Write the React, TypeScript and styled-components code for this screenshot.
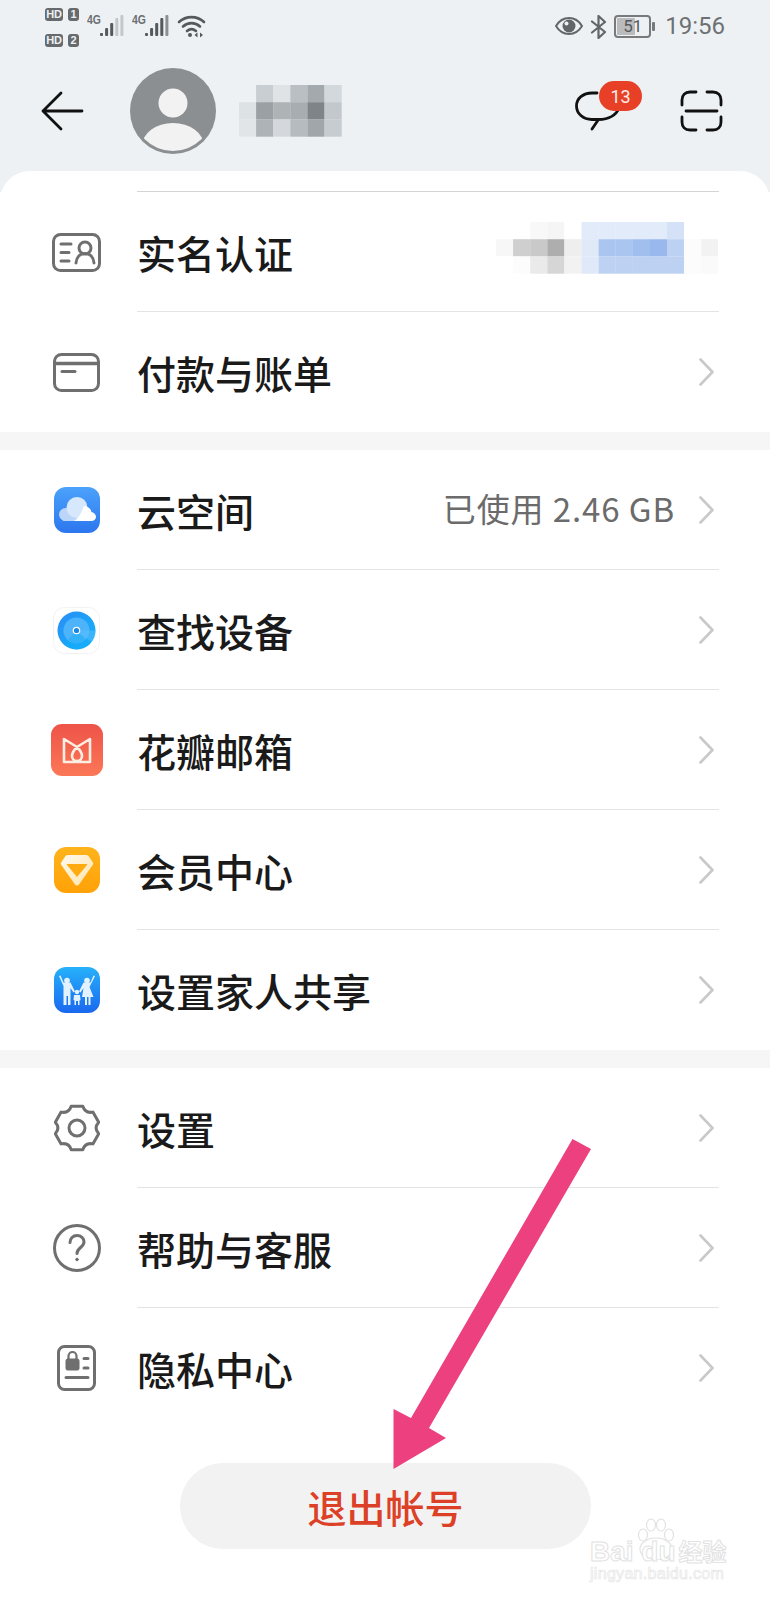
import React from "react";
import styled, { createGlobalStyle } from "styled-components";

const GlobalStyle = createGlobalStyle`
  html, body {
    margin: 0;
    padding: 0;
    background: #fff;
  }
  * {
    box-sizing: border-box;
  }
`;

const Page = styled.div`
  position: relative;
  width: 770px;
  height: 1600px;
  overflow: hidden;
  background: #edf1f4;
  font-family: "Noto Sans CJK SC", "Noto Sans", sans-serif;
`;

/* status bar */
const StatusBar = styled.div`
  display: flex;
  align-items: flex-start;
  justify-content: space-between;
  height: 68px;
  padding: 8px 45px 0;
`;

const StatusGroup = styled.div`
  display: flex;
  align-items: flex-start;
`;

const SimStack = styled.div`
  display: flex;
  flex-direction: column;
  gap: 13px;
  margin-right: 8px;
`;

const SimRow = styled.div`
  display: flex;
  gap: 5px;
`;

const SimBadge = styled.span<{ $wide?: boolean }>`
  display: block;
  width: ${(p) => (p.$wide ? "18px" : "11px")};
  height: 13px;
  border-radius: 3px;
  background: #666a6d;
  color: #edf1f4;
  font: 700 11px/13px "Liberation Sans", sans-serif;
  text-align: center;
  letter-spacing: -0.3px;
`;

const Network = styled.span`
  width: 13px;
  margin-top: 5px;
  color: #6a6e71;
  font: 700 13px/13px "Liberation Sans", sans-serif;
  transform: scaleX(0.8);
  transform-origin: left;
`;

const SignalIcon = styled.svg`
  display: block;
  width: 24px;
  height: 22px;
  margin: 7px 8px 0 0;
`;

const WifiIcon = styled.svg`
  display: block;
  width: 29px;
  height: 23px;
  margin-top: 7px;
`;

const EyeIcon = styled.svg`
  display: block;
  width: 28px;
  height: 18px;
  margin: 9px 7px 0 0;
`;

const BluetoothIcon = styled.svg`
  display: block;
  width: 17px;
  height: 24px;
  margin: 7px 7px 0 0;
`;

const Battery = styled.div`
  position: relative;
  width: 37px;
  height: 23px;
  margin: 7px 14px 0 0;
  border: 2px solid #77797b;
  border-radius: 4px;
  color: #55585a;
  font: 400 17px/19px Roboto, sans-serif;
  text-align: center;

  &::before {
    content: "";
    position: absolute;
    inset: 1px 14px 1px 1px;
    background: #b9bbbd;
    border-radius: 1px;
    z-index: 0;
  }

  &::after {
    content: "";
    position: absolute;
    top: 5px;
    right: -6px;
    width: 3px;
    height: 9px;
    background: #77797b;
    border-radius: 1px;
  }

  span {
    position: relative;
    z-index: 1;
  }
`;

const Clock = styled.span`
  margin-top: 3px;
  color: #6e7173;
  font: 400 24px/30px Roboto, sans-serif;
`;

/* top bar */
const TopBar = styled.header`
  display: flex;
  align-items: center;
  height: 103px;
  padding: 0 47px 17px 41px;
`;

const BackIcon = styled.svg`
  display: block;
  width: 43px;
  height: 40px;
  margin-right: 46px;
`;

const Avatar = styled.svg`
  display: block;
  width: 86px;
  height: 86px;
  margin-right: 23px;
`;

const Mosaic = styled.svg`
  display: block;
`;

const Actions = styled.div`
  display: flex;
  align-items: center;
  gap: 58px;
  margin-left: auto;
`;

const ChatWrap = styled.div`
  position: relative;
  width: 47px;
  height: 40px;
`;

const Badge = styled.span`
  position: absolute;
  top: -10px;
  left: 24px;
  width: 43px;
  height: 30px;
  border-radius: 15px;
  background: #e84026;
  color: #fdeeea;
  font: 400 18px/32px Roboto, sans-serif;
  text-align: center;
`;

const LineIcon = styled.svg`
  display: block;
`;

/* list */
const Sheet = styled.main`
  height: 1429px;
  padding-top: 20px;
  border-radius: 30px 30px 0 0;
  background: #fff;
`;

const TopRule = styled.div`
  height: 1px;
  margin: 0 51px 0 137px;
  background: #d4d4d4;
`;

const Group = styled.section`
  background: #fff;
`;

const GroupGap = styled.div`
  height: 18px;
  background: #f6f6f6;
`;

const Row = styled.div`
  display: flex;
  align-items: stretch;
  height: 120px;
  padding: 0 51px 0 46px;
`;

const IconSlot = styled.div`
  display: flex;
  align-items: center;
  justify-content: center;
  flex: none;
  width: 61px;
  margin-right: 30px;
`;

const RowBody = styled.div<{ $last?: boolean }>`
  display: flex;
  align-items: center;
  flex: 1;
  padding-right: 5px;
  border-bottom: ${(p) => (p.$last ? "0" : "1px solid #e4e4e4")};
`;

const RowLabel = styled.span`
  color: #1a1a1a;
  font-size: 39px;
  font-weight: 500;
  line-height: 46px;
`;

const RowValue = styled.span`
  margin-left: auto;
  margin-right: 24px;
  margin-bottom: 4px;
  color: #6b6b6b;
  font-size: 33px;
  line-height: 40px;
  letter-spacing: 0.9px;
`;

const Chevron = styled.svg<{ $alone?: boolean }>`
  display: block;
  flex: none;
  width: 15px;
  height: 28px;
  margin-left: ${(p) => (p.$alone ? "auto" : "0")};
`;

const RowMosaic = styled(Mosaic)`
  margin: 0 -4px 8px auto;
`;

const AppIcon = styled.svg`
  display: block;
`;

/* footer */
const LogoutWrap = styled.div`
  display: flex;
  justify-content: flex-start;
  padding: 35px 0 0 180px;
`;

const LogoutButton = styled.button`
  width: 411px;
  height: 86px;
  border: 0;
  border-radius: 43px;
  background: #f2f2f2;
  color: #dc4127;
  font-family: inherit;
  font-size: 39px;
  font-weight: 500;
`;

/* annotation and watermark */
const PointerArrow = styled.svg`
  position: absolute;
  top: 0;
  left: 0;
  width: 770px;
  height: 1600px;
  pointer-events: none;
`;

const Watermark = styled.div`
  position: absolute;
  top: 1516px;
  left: 590px;
  width: 140px;
  height: 68px;
  font-family: "Liberation Sans", sans-serif;
  pointer-events: none;
`;

const Paw = styled.svg`
  position: absolute;
  top: 2px;
  left: 44px;
  width: 42px;
  height: 42px;
`;

const WatermarkTitle = styled.div`
  position: absolute;
  top: 21px;
  left: 0;
  font-size: 28px;
  font-weight: 700;
  line-height: 28px;
  white-space: nowrap;
  color: #fff;
  -webkit-text-stroke: 1px #e2e2e2;

  span {
    margin-left: 3px;
    font-family: "Noto Sans CJK SC", sans-serif;
    font-size: 24px;
  }
`;

const WatermarkUrl = styled.div`
  position: absolute;
  top: 50px;
  left: 0;
  font-size: 16px;
  line-height: 16px;
  letter-spacing: 0.3px;
  white-space: nowrap;
  color: #fff;
  -webkit-text-stroke: 0.7px #e6e6e6;
`;

const nameCells = [
  ["#edf1f4", "#c9ced2", "#dfe3e6", "#b9bfc3", "#a4a9ad", "#d3d8dc"],
  ["#dde2e5", "#9ba0a4", "#aeb3b6", "#a8adb1", "#7f8488", "#c3c8cc"],
  ["#e1e5e8", "#aeb3b7", "#d4d8dc", "#b6bbbf", "#a1a6aa", "#c7ccd0"],
];

const realNameCells = [
  ["#fff", "#fff", "#f8f8f8", "#f5f5f5", "#fff", "#e1ebfa", "#e1ebfa", "#e1ebfa", "#e1ebfa", "#e1ebfa", "#d5e1f6", "#fff", "#fff"],
  ["#f7f7f7", "#cfcfcf", "#c9c9c9", "#aeaeae", "#eeeeee", "#dfe9f8", "#aac5ef", "#aac5ef", "#a0bfee", "#98b8ee", "#bdd1f2", "#fcfcfc", "#f2f2f2"],
  ["#fff", "#fcfcfc", "#eaeaea", "#d6d6d6", "#f2f2f2", "#e0e9f9", "#bdd1f2", "#bdd1f2", "#bdd1f2", "#bdd1f2", "#bdd1f2", "#fcfcfc", "#fafafa"],
];

const MosaicBlocks = ({ cells }: { cells: string[][] }) => (
  <>
    {cells.map((row, y) =>
      row.map((fill, x) => (
        <rect key={`${x}-${y}`} x={x * 17.1} y={y * 17.2} width={17.2} height={17.3} fill={fill} />
      ))
    )}
  </>
);

const Signal = ({ levels }: { levels: string[] }) => {
  const heights = [3, 8, 13, 18, 21];
  return (
    <SignalIcon viewBox="0 0 24 22">
      {levels.map((fill, i) => (
        <rect
          key={i}
          x={i * 5.1}
          y={21 - heights[i]}
          width={3}
          height={heights[i]}
          rx={1}
          fill={fill}
        />
      ))}
    </SignalIcon>
  );
};

// six rounded lobes, flat on top like the system settings glyph
const gearPath = () => {
  const at = (deg: number, r: number) => {
    const a = (deg * Math.PI) / 180;
    return `${(23 + r * Math.cos(a)).toFixed(1)} ${(24 + r * Math.sin(a)).toFixed(1)}`;
  };
  let d = `M${at(-90 - 15, 22.5)}`;
  for (let i = 0; i < 6; i++) {
    const lobe = -90 + i * 60;
    d += `L${at(lobe + 15, 22.5)}Q${at(lobe + 30, 16.5)} ${at(lobe + 45, 22.5)}`;
  }
  return d + "Z";
};

const ChevronRight = ({ alone }: { alone?: boolean }) => (
  <Chevron $alone={alone} viewBox="0 0 15 28" fill="none" stroke="#c9c9c9" strokeWidth="2.6" strokeLinecap="round" strokeLinejoin="round">
    <path d="M1.5 1.5 13.5 14 1.5 26.5" />
  </Chevron>
);

const IdCardIcon = () => (
  <LineIcon width="49" height="39" viewBox="0 0 49 39" fill="none" stroke="#6f6f6f" strokeWidth="3" strokeLinecap="round">
    <rect x="1.5" y="1.5" width="46" height="36" rx="7" />
    <path d="M9 11h10M9 19.5h8M9 28h8" />
    <circle cx="33" cy="15" r="6" />
    <path d="M24 30c.5-6 4-9.5 9-9.5s8.5 3.5 9 9.5" />
  </LineIcon>
);

const BankCardIcon = () => (
  <LineIcon width="47" height="39" viewBox="0 0 47 39" fill="none" stroke="#6f6f6f" strokeWidth="3" strokeLinecap="round">
    <rect x="1.5" y="1.5" width="44" height="36" rx="7" />
    <path d="M2 10.5h43" strokeWidth="3.5" />
    <path d="M9 18.5h13" />
  </LineIcon>
);

const CloudIcon = () => (
  <AppIcon width="46" height="46" viewBox="0 0 46 46">
    <defs>
      <linearGradient id="cloudBg" x1="0" y1="0" x2="0" y2="1">
        <stop offset="0" stopColor="#4ba2fb" />
        <stop offset="1" stopColor="#2c76ee" />
      </linearGradient>
    </defs>
    <rect width="46" height="46" rx="12" fill="url(#cloudBg)" />
    <circle cx="11.5" cy="27.5" r="6.5" fill="#bcd6fa" />
    <rect x="9" y="25" width="16" height="9" fill="#bcd6fa" />
    <circle cx="23" cy="20.5" r="10.5" fill="#d8e8fc" />
    <path d="M20 34c6-4 8-10 10-15 4 0 7 3 7.5 6 3 .5 4.500 3 4.500 5s-2 4-4.500 4z" fill="#fff" />
  </AppIcon>
);

const FinderIcon = () => (
  <AppIcon width="47" height="47" viewBox="0 0 47 47">
    <defs>
      <linearGradient id="findBg" x1="0" y1="0" x2="1" y2="1">
        <stop offset="0" stopColor="#2a8df5" />
        <stop offset="1" stopColor="#12b5fb" />
      </linearGradient>
    </defs>
    <rect x=".5" y=".5" width="46" height="46" rx="11" fill="#fff" stroke="#f2f2f2" />
    <circle cx="23.5" cy="23.5" r="19" fill="url(#findBg)" />
    <circle cx="23.5" cy="23.5" r="13" fill="#4db4fb" />
    <path d="M23.5 23.5 37 37a19 19 0 0 0 0 0L37 37a19 19 0 0 1-26 .5z" fill="#12aefb" opacity=".45" />
    <path d="M23.5 23.5 38.5 35a19 19 0 0 0 4-11.500z" fill="#5cc0fc" opacity=".5" />
    <circle cx="23.5" cy="23.5" r="3.200" fill="#1a86e8" stroke="#fff" strokeWidth="1.200" />
  </AppIcon>
);

const MailIcon = () => (
  <AppIcon width="52" height="52" viewBox="0 0 52 52">
    <defs>
      <linearGradient id="mailBg" x1="0" y1="0" x2="0" y2="1">
        <stop offset="0" stopColor="#ee5349" />
        <stop offset="1" stopColor="#fb7857" />
      </linearGradient>
    </defs>
    <rect width="52" height="52" rx="11" fill="url(#mailBg)" />
    <path
      d="M13 15v23h26V15l-13 8zM26 23c-3 3-5 6-5 9a5 5 0 0 0 10 0c0-3-2-6-5-9z"
      fill="none"
      stroke="#fdeee4"
      strokeWidth="2.6"
      strokeLinejoin="round"
    />
  </AppIcon>
);

const MemberIcon = () => (
  <AppIcon width="46" height="46" viewBox="0 0 46 46">
    <defs>
      <linearGradient id="memberBg" x1="0" y1="0" x2="0" y2="1">
        <stop offset="0" stopColor="#ffb31a" />
        <stop offset="1" stopColor="#ffa208" />
      </linearGradient>
      <linearGradient id="memberBand" x1="0" y1="0" x2="1" y2="1">
        <stop offset="0" stopColor="#fffaf0" />
        <stop offset="1" stopColor="#fde3a8" />
      </linearGradient>
    </defs>
    <rect width="46" height="46" rx="12" fill="url(#memberBg)" />
    <path d="M14 8h18c1 0 2 .4 2.700 1.200l4 6c.7 1 .6 2.200-.2 3L25 37.500c-1 1.300-3 1.300-4 0L7.500 18.200c-.8-.8-.9-2-.2-3l4-6C12 8.400 13 8 14 8z" fill="url(#memberBand)" />
    <path d="M13.500 17h19c.6 0 .9.6.5 1L23 30 13 18c-.4-.4-.1-1 .5-1z" fill="#ffab10" />
  </AppIcon>
);

const FamilyIcon = () => (
  <AppIcon width="46" height="46" viewBox="0 0 46 46">
    <defs>
      <linearGradient id="familyBg" x1="0" y1="0" x2="0" y2="1">
        <stop offset="0" stopColor="#26b1fb" />
        <stop offset="1" stopColor="#1a68ee" />
      </linearGradient>
    </defs>
    <rect width="46" height="46" rx="12" fill="url(#familyBg)" />
    <g fill="#e3f2fe">
      <circle cx="13" cy="13.500" r="2.800" />
      <circle cx="33" cy="13.500" r="2.800" />
      <circle cx="23" cy="25" r="2.200" />
      <path d="M5 9l1.500-.5L9.500 15.500h7l4.500 9-1.500 1-3-4.500V38h-2.500v-9h-1.500v9H9.500V19z" />
      <path d="M41 9l-1.500-.5L36.500 15.500h-7l-4.500 9 1.500 1 3-4.500-1.500 9h3v8h2v-8h1.500v8h2v-8h3L35.500 20z" />
      <path d="M20 28h6l.5 5-1 .5V38H24v-4h-2v4h-1.500v-4.500l-1-.5z" />
    </g>
  </AppIcon>
);

const GearIcon = () => (
  <LineIcon width="46" height="48" viewBox="0 0 46 48" fill="none" stroke="#6f6f6f" strokeWidth="3" strokeLinejoin="round">
    <path d={gearPath()} />
    <circle cx="23" cy="24" r="8" />
  </LineIcon>
);

const HelpIcon = () => (
  <LineIcon width="48" height="48" viewBox="0 0 48 48" fill="none" stroke="#6f6f6f" strokeWidth="3" strokeLinecap="round">
    <circle cx="24" cy="24" r="22.5" />
    <path d="M17 18.5c0-4 3-7 7-7s7 2.800 7 6.500c0 5.500-7 5.500-7 11.500" />
    <circle cx="24" cy="35.500" r="1.300" fill="#6f6f6f" strokeWidth="1" />
  </LineIcon>
);

const PrivacyIcon = () => (
  <LineIcon width="39" height="46" viewBox="0 0 39 46" fill="none" stroke="#6f6f6f" strokeWidth="3" strokeLinecap="round">
    <rect x="1.5" y="1.5" width="36" height="43" rx="6" />
    <rect x="9" y="14" width="13" height="11" rx="1.5" fill="#6f6f6f" strokeWidth="1" />
    <path d="M11.500 14v-3a4 4 0 0 1 8 0v3" strokeWidth="2.2" />
    <path d="M27 13.500h4M27 23h4M9 32.500h22" />
  </LineIcon>
);

type Item = { label: string; icon: React.ReactNode; value?: string; hidden?: boolean };

const accountItems: Item[] = [
  { label: "实名认证", icon: <IdCardIcon />, hidden: true },
  { label: "付款与账单", icon: <BankCardIcon /> },
];

const serviceItems: Item[] = [
  { label: "云空间", icon: <CloudIcon />, value: "已使用 2.46 GB" },
  { label: "查找设备", icon: <FinderIcon /> },
  { label: "花瓣邮箱", icon: <MailIcon /> },
  { label: "会员中心", icon: <MemberIcon /> },
  { label: "设置家人共享", icon: <FamilyIcon /> },
];

const systemItems: Item[] = [
  { label: "设置", icon: <GearIcon /> },
  { label: "帮助与客服", icon: <HelpIcon /> },
  { label: "隐私中心", icon: <PrivacyIcon /> },
];

const ItemList = ({ items }: { items: Item[] }) => (
  <Group>
    {items.map((item, i) => (
      <Row key={item.label}>
        <IconSlot>{item.icon}</IconSlot>
        <RowBody $last={i === items.length - 1}>
          <RowLabel>{item.label}</RowLabel>
          {item.hidden ? (
            <RowMosaic width="222" height="52" viewBox="0 0 222 52">
              <MosaicBlocks cells={realNameCells} />
            </RowMosaic>
          ) : (
            <>
              {item.value && <RowValue>{item.value}</RowValue>}
              <ChevronRight alone={!item.value} />
            </>
          )}
        </RowBody>
      </Row>
    ))}
  </Group>
);

const App = () => {
  return (
    <Page>
      <GlobalStyle />
      <StatusBar>
        <StatusGroup>
          <SimStack>
            <SimRow>
              <SimBadge $wide>HD</SimBadge>
              <SimBadge>1</SimBadge>
            </SimRow>
            <SimRow>
              <SimBadge $wide>HD</SimBadge>
              <SimBadge>2</SimBadge>
            </SimRow>
          </SimStack>
          <Network>4G</Network>
          <Signal levels={["#55595c", "#55595c", "#55595c", "#c4c7ca", "#c4c7ca"]} />
          <Network>4G</Network>
          <Signal levels={["#55595c", "#55595c", "#55595c", "#55595c", "#8c9093"]} />
          <WifiIcon viewBox="0 0 29 23" fill="none" stroke="#55595c" strokeWidth="2.6" strokeLinecap="round">
            <path d="M2 7c7-6.500 18-6.500 25 0" />
            <path d="M6 11.500c5-4.500 12-4.500 17 0" />
            <path d="M10 16c3-2.500 6-2.500 9 0" />
            <circle cx="13" cy="20" r="2" fill="#55595c" stroke="none" />
            <path d="M20.500 17.500v5l-3-2.500zM23 17.500v5l3-2.500z" fill="#55595c" stroke="none" />
          </WifiIcon>
        </StatusGroup>
        <StatusGroup>
          <EyeIcon viewBox="0 0 28 18">
            <path d="M1 9c3-5 8-8 13-8s10 3 13 8c-3 5-8 8-13 8S4 14 1 9z" fill="none" stroke="#636668" strokeWidth="2" />
            <circle cx="14" cy="9" r="6.500" fill="#636668" />
            <circle cx="11.500" cy="6.500" r="2" fill="#edf1f4" />
          </EyeIcon>
          <BluetoothIcon viewBox="0 0 17 24" fill="none" stroke="#636668" strokeWidth="2.2" strokeLinejoin="round" strokeLinecap="round">
            <path d="M2 6.500 15 17 8.500 23V1L15 7 2 17.500" />
          </BluetoothIcon>
          <Battery>
            <span>51</span>
          </Battery>
          <Clock>19:56</Clock>
        </StatusGroup>
      </StatusBar>

      <TopBar>
        <BackIcon viewBox="0 0 43 40" fill="none" stroke="#111" strokeWidth="2.8" strokeLinecap="round" strokeLinejoin="round">
          <path d="M20 2 2 20l18 18M2 20h39" />
        </BackIcon>
        <Avatar viewBox="0 0 86 86">
          <defs>
            <clipPath id="avatarClip">
              <circle cx="43" cy="43" r="40" />
            </clipPath>
          </defs>
          <circle cx="43" cy="43" r="43" fill="#8c8f91" />
          <circle cx="43" cy="35" r="14.500" fill="#f2f2f2" />
          <ellipse cx="43" cy="78" rx="31" ry="23" fill="#f2f2f2" clipPath="url(#avatarClip)" />
        </Avatar>
        <Mosaic width="104" height="52" viewBox="0 0 104 52">
          <MosaicBlocks cells={nameCells} />
        </Mosaic>
        <Actions>
          <ChatWrap>
            <LineIcon width="47" height="40" viewBox="0 0 47 40" fill="none" stroke="#111" strokeWidth="2.8" strokeLinecap="round" strokeLinejoin="round">
              <path d="M22 2h-5C8 2 1.500 7.500 1.500 15S8 28.500 17 28.500h6.500L17 38M23.500 28.500c10 0 17-3 21-12" />
            </LineIcon>
            <Badge>13</Badge>
          </ChatWrap>
          <LineIcon width="43" height="42" viewBox="0 0 43 42" fill="none" stroke="#111" strokeWidth="2.8" strokeLinecap="round" strokeLinejoin="round">
            <path d="M16 2H10C5 2 2 5 2 10v5M27 2h6c5 0 8 3 8 8v5M16 40H10c-5 0-8-3-8-8v-5M27 40h6c5 0 8-3 8-8v-5M6 21h31" />
          </LineIcon>
        </Actions>
      </TopBar>

      <Sheet>
        <TopRule />
        <ItemList items={accountItems} />
        <GroupGap />
        <ItemList items={serviceItems} />
        <GroupGap />
        <ItemList items={systemItems} />
        <LogoutWrap>
          <LogoutButton>退出帐号</LogoutButton>
        </LogoutWrap>
      </Sheet>

      <PointerArrow viewBox="0 0 770 1600">
        <path d="M572.500 1139 591 1149 429 1428 446 1438 393.500 1469V1409L411 1418z" fill="#ec407f" />
      </PointerArrow>

      <Watermark>
        <Paw viewBox="0 0 42 42" fill="#fff" stroke="#e2e2e2" strokeWidth="1.2">
          <ellipse cx="9" cy="17" rx="4.500" ry="6" />
          <ellipse cx="17" cy="7" rx="4.500" ry="6" />
          <ellipse cx="27" cy="7" rx="4.500" ry="6" />
          <ellipse cx="35" cy="17" rx="4.500" ry="6" />
          <ellipse cx="22" cy="31" rx="16" ry="11" />
        </Paw>
        <WatermarkTitle>
          Bai du<span>经验</span>
        </WatermarkTitle>
        <WatermarkUrl>jingyan.baidu.com</WatermarkUrl>
      </Watermark>
    </Page>
  );
};

export default App;
